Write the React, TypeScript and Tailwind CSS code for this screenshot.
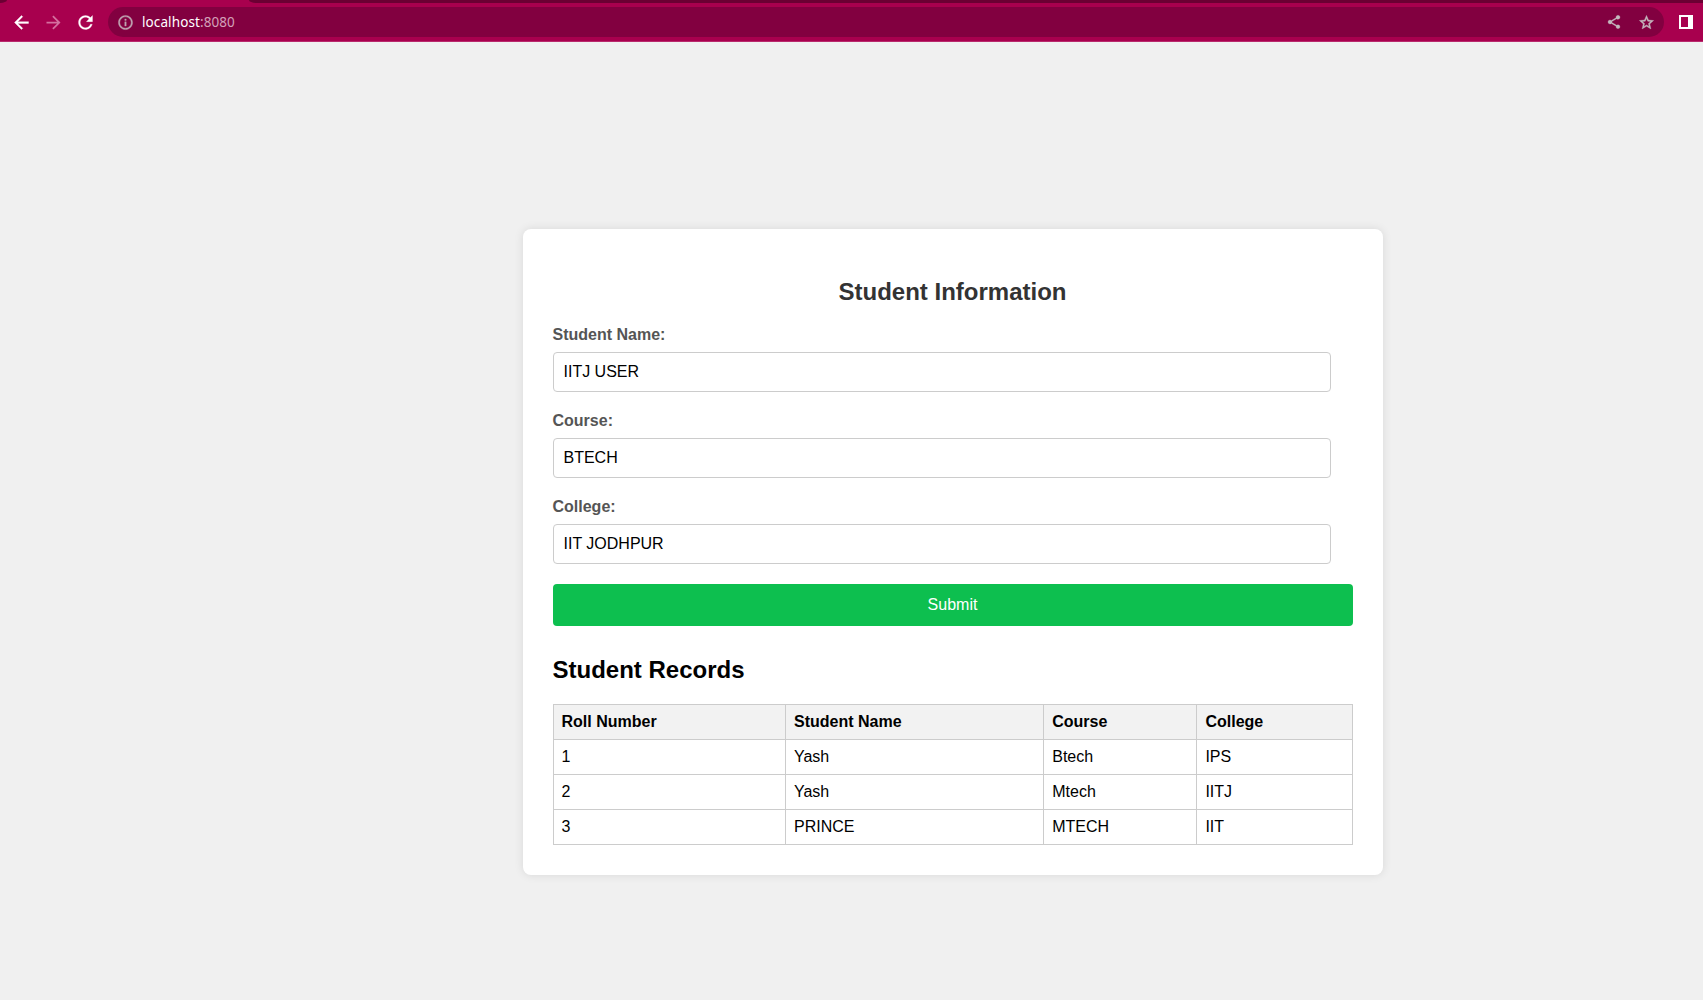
import React from "react";

const fields = [
  { label: "Student Name:", value: "IITJ USER" },
  { label: "Course:", value: "BTECH" },
  { label: "College:", value: "IIT JODHPUR" },
];

const columns = ["Roll Number", "Student Name", "Course", "College"];

const records = [
  ["1", "Yash", "Btech", "IPS"],
  ["2", "Yash", "Mtech", "IITJ"],
  ["3", "PRINCE", "MTECH", "IIT"],
];

function Icon({ d, size, className }: { d: string; size: number; className: string }) {
  return (
    <svg viewBox="0 0 24 24" width={size} height={size} fill="currentColor" className={className}>
      <path d={d} />
    </svg>
  );
}

function BrowserBar() {
  return (
    <header className="h-[42px] border-b border-[#b92a6d] bg-[#a8004e]">
      <div className="flex h-[3px] justify-between">
        <div className="w-[7px] rounded-br-[7px_3px] bg-[#6b0033]" />
        <div className="w-[1454px] rounded-bl-[7px_3px] bg-[#6b0033]" />
      </div>
      <div className="flex h-[38px] items-center">
        <Icon
          size={21}
          className="ml-[11px] shrink-0 stroke-current stroke-[0.4] text-white"
          d="M20 11H7.83l5.59-5.59L12 4l-8 8 8 8 1.41-1.41L7.83 13H20v-2z"
        />
        <Icon
          size={21}
          className="ml-[11px] shrink-0 text-[#d4709f]"
          d="M12 4l-1.41 1.41L16.17 11H4v2h12.17l-5.58 5.59L12 20l8-8z"
        />
        <Icon
          size={21}
          className="ml-[11px] shrink-0 stroke-current stroke-[0.3] text-white"
          d="M17.65 6.35C16.2 4.9 14.21 4 12 4c-4.42 0-7.99 3.58-7.99 8s3.57 8 7.99 8c3.73 0 6.84-2.55 7.73-6h-2.08c-.82 2.33-3.04 4-5.65 4-3.31 0-6-2.69-6-6s2.69-6 6-6c1.66 0 3.14.69 4.22 1.78L13 11h7V4l-2.35 2.35z"
        />
        <div className="ml-[12px] flex h-[30px] w-[1556px] shrink-0 items-center rounded-full bg-[#820040]">
          <Icon
            size={17}
            className="ml-[9px] shrink-0 stroke-current stroke-[0.5] text-[#bfa5b2]"
            d="M11 7h2v2h-2zm0 4h2v6h-2zm1-9C6.48 2 2 6.48 2 12s4.48 10 10 10 10-4.48 10-10S17.52 2 12 2zm0 18c-4.41 0-8-3.59-8-8s3.59-8 8-8 8 3.59 8 8-3.59 8-8 8z"
          />
          <span className="ml-[8px] flex-1 font-['Noto_Sans',sans-serif] text-[13.5px] leading-[18px] tracking-[0.1px] text-[#d3a0b8]">
            <span className="text-white">localhost</span>:8080
          </span>
          <Icon
            size={16}
            className="mr-[16px] shrink-0 stroke-current stroke-[0.4] text-[#c4b8be]"
            d="M18 16.08c-.76 0-1.44.3-1.96.77L8.91 12.7c.05-.23.09-.46.09-.7s-.04-.47-.09-.7l7.05-4.11c.54.5 1.25.81 2.04.81 1.66 0 3-1.34 3-3s-1.34-3-3-3-3 1.34-3 3c0 .24.04.47.09.7L8.04 9.81C7.5 9.31 6.79 9 6 9c-1.66 0-3 1.34-3 3s1.34 3 3 3c.79 0 1.5-.31 2.04-.81l7.12 4.16c-.05.21-.08.43-.08.65 0 1.61 1.31 2.92 2.92 2.92s2.92-1.31 2.92-2.92-1.31-2.92-2.92-2.92z"
          />
          <Icon
            size={17}
            className="mr-[9.5px] shrink-0 stroke-current stroke-[0.6] text-[#c4b8be]"
            d="M22 9.24l-7.19-.62L12 2 9.19 8.63 2 9.24l5.46 4.73L5.82 21 12 17.27 18.18 21l-1.63-7.03L22 9.24zM12 15.4l-3.76 2.27 1-4.28-3.32-2.88 4.38-.38L12 6.1l1.71 4.04 4.38.38-3.32 2.88 1 4.28L12 15.4z"
          />
        </div>
        <div className="ml-[15px] h-[14px] w-[14px] shrink-0 border-2 border-r-[5px] border-white" />
      </div>
    </header>
  );
}

export default function App() {
  return (
    <div className="h-[1000px] w-[1703px] overflow-hidden bg-[#f0f0f0] font-['Liberation_Sans',Arial,sans-serif] text-base leading-[18px] text-black">
      <BrowserBar />
      <main className="mt-[187px] ml-[522.5px] w-[860px] rounded-lg bg-white p-[30px] shadow-[0_0_10px_rgba(0,0,0,0.1)]">
        <h2 className="mt-[19px] mb-[21px] text-center text-2xl leading-[27px] font-bold text-[#333]">
          Student Information
        </h2>
        <form>
          {fields.map((f) => (
            <div key={f.label} className="mb-5">
              <label className="mb-2 block font-bold text-[#555]">{f.label}</label>
              <input
                type="text"
                defaultValue={f.value}
                className="block h-10 w-[778px] rounded border border-[#ccc] px-[10px]"
              />
            </div>
          ))}
          <button type="button" className="block h-[42px] w-full rounded bg-[#0dbf4f] text-white">
            Submit
          </button>
        </form>
        <h2 className="mt-[30px] mb-[21px] text-2xl leading-[27px] font-bold">Student Records</h2>
        <table className="w-full border-collapse">
          <thead>
            <tr className="h-[35px] bg-[#f2f2f2]">
              {columns.map((c) => (
                <th key={c} className="border border-[#ccc] px-2 text-left font-bold">
                  {c}
                </th>
              ))}
            </tr>
          </thead>
          <tbody>
            {records.map((r) => (
              <tr key={r[0]} className="h-[35px]">
                {r.map((cell, i) => (
                  <td key={i} className="border border-[#ccc] px-2">
                    {cell}
                  </td>
                ))}
              </tr>
            ))}
          </tbody>
        </table>
      </main>
    </div>
  );
}
